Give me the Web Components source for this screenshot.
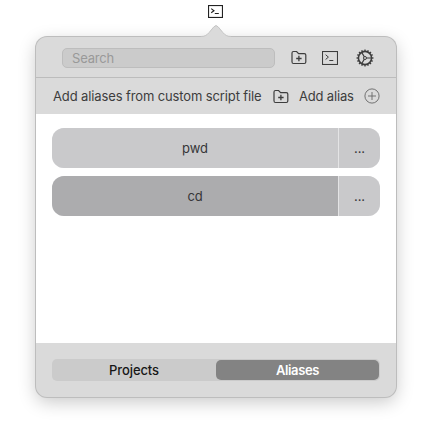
<!DOCTYPE html>
<html lang="en">
<head>
<meta charset="utf-8">
<title>Aliases</title>
<style>
html,body{margin:0;height:437px;overflow:hidden;background:#fff;font:13px/16px Inter,"Liberation Sans",sans-serif;color:#3d3d3d}
</style>
</head>
<body>
<alias-app></alias-app>
<script>
const define = (name, markup, init) => {
  const template = document.createElement('template');
  template.innerHTML = markup;
  customElements.define(name, class extends HTMLElement {
    constructor() {
      super();
      this.attachShadow({ mode: 'open' }).append(template.content.cloneNode(true));
    }
    connectedCallback() { if (init) init(this, this.shadowRoot); }
  });
};

const teeth = Array.from({ length: 16 }, (_, i) =>
  `<path d="M9 .5V2.4" transform="rotate(${i * 22.5} 9 9)" stroke-width="1.3"/>`).join('');
const icons = {
  terminal: [16, 14, '<rect x=".5" y=".5" width="15" height="13" stroke-width="1.1"/><path d="M3.6 3.7 6.4 6.1 3.6 8.5M7.3 9.5h4" stroke-width="1"/>'],
  tray: [15, 13, '<rect x=".5" y=".5" width="14" height="12" stroke-width="1.2"/><path d="M3.2 3.6 6 5.7 3.2 7.8M6.8 8.5h4" stroke-width="1.1"/>'],
  folder: [16, 15, '<path d="M1 11.8V3Q1 1.5 2.5 1.5H5.6L7.6 3.6H13.3Q14.8 3.6 14.8 5.1V12Q14.8 13.5 13.3 13.5H2.5Q1 13.5 1 11.8Z" stroke-width="1.2"/><path d="M7.9 5.8v5.4M5.2 8.5h5.4" stroke-width="1.3"/>'],
  gear: [18, 18, `<circle cx="9" cy="9" r="6.6" stroke-width="1.6"/>${teeth}<circle cx="9" cy="9" r="1.5" stroke-width="1"/><path d="M10.6 9H15.3M8.2 7.6 5.8 3.5M8.2 10.4 5.8 14.5" stroke-width="1.2"/>`],
  plus: [16, 16, '<circle cx="8" cy="8" r="7.1" stroke-width=".9"/><path d="M8 4v8M4 8h8" stroke-width=".9"/>']
};
define('ui-icon', `<style>:host{display:block;flex:none;line-height:0}svg{display:block;fill:none;stroke:currentColor}</style><div></div>`, (el, root) => {
  const [w, h, shape] = icons[el.getAttribute('name')];
  root.querySelector('div').innerHTML = `<svg width="${w}" height="${h}" viewBox="0 0 ${w} ${h}">${shape}</svg>`;
});

define('search-field', `<style>
:host{display:flex;align-items:center;box-sizing:border-box;width:213px;height:20px;margin-top:1px;padding-left:9px;border:1px solid #bdbdbd;border-radius:5px;background:#cbcbcb;color:#999;letter-spacing:-.2px}
</style><span><slot></slot></span>`);

define('top-bar', `<style>
:host{display:flex;align-items:center;box-sizing:border-box;height:41px;padding:1px 0 0 26px;border-bottom:1px solid #bcbcbc}
.folder{margin-left:16px}.term{margin-left:15px}.gear{margin-left:18px}
</style><search-field>Search</search-field><ui-icon class="folder" name="folder"></ui-icon><ui-icon class="term" name="terminal"></ui-icon><ui-icon class="gear" name="gear"></ui-icon>`);

define('action-bar', `<style>
:host{display:flex;align-items:center;box-sizing:border-box;height:36px;padding-left:17px;white-space:nowrap}
.long{width:209px;letter-spacing:-.12px}.add{width:55px;margin-left:10px;letter-spacing:-.17px}
.folder{margin-left:11px}.plus{margin-left:10px;color:#666}
</style><span class="long">Add aliases from custom script file</span><ui-icon class="folder" name="folder"></ui-icon><span class="add">Add alias</span><ui-icon class="plus" name="plus"></ui-icon>`);

define('alias-row', `<style>
:host{display:grid;grid-template-columns:286px 41px;gap:1px;height:40px;border-radius:12px;overflow:hidden;background:#e4e4e5;color:#363638;letter-spacing:-.1px}
div{display:grid;place-items:center;background:#c9c9cb}
:host([active]) .name{background:#acacae}
</style><div class="name"><span><slot></slot></span></div><div><span>...</span></div>`);

define('segment-tabs', `<style>
:host{display:grid;grid-template-columns:164px 163px;box-sizing:border-box;width:328px;height:22px;padding:1px 1px 1px 0;border-radius:5px;background:#cbcbcb;color:#171717;font-weight:500;letter-spacing:-.1px}
div{display:grid;place-items:center;border-radius:5px}
.on{background:#838383;color:#fff;font-weight:600;letter-spacing:-.4px}
</style><div><span>Projects</span></div><div class="on"><span>Aliases</span></div>`);

define('popover-panel', `<style>
:host{display:block;position:relative;width:360px;height:360px;margin:19px auto 0;border-radius:11px;background:#dadada;box-shadow:0 0 0 1px #bdbdbd,0 5px 18px rgba(0,0,0,.22)}
.arrow{position:absolute;left:165px;top:-13px;display:block}
</style><svg class="arrow" width="30" height="15" viewBox="0 0 30 15"><path d="M0 12.5C4 12.5 6 11 8 8.7L12.7 3Q15 0 17.3 3L22 8.7C24 11 26 12.5 30 12.5V15H0Z" fill="#dadada"/><path d="M0 12.5C4 12.5 6 11 8 8.7L12.7 3Q15 0 17.3 3L22 8.7C24 11 26 12.5 30 12.5" fill="none" stroke="#c4c4c4"/></svg><slot></slot>`);

define('alias-app', `<style>
:host{display:block;height:437px;overflow:hidden}
.tray{display:flex;justify-content:center;padding-top:5px;height:13px;padding-right:1px;color:#222}
.list{display:flex;flex-direction:column;gap:8px;box-sizing:border-box;height:229px;padding:14px 16px;background:#fff}
.foot{display:flex;height:54px;padding:16px 16px 0;box-sizing:border-box}
</style>
<div class="tray"><ui-icon name="tray"></ui-icon></div>
<popover-panel><top-bar></top-bar><action-bar></action-bar>
<div class="list"><alias-row>pwd</alias-row><alias-row active>cd</alias-row></div>
<div class="foot"><segment-tabs></segment-tabs></div></popover-panel>`);
</script>
</body>
</html>
